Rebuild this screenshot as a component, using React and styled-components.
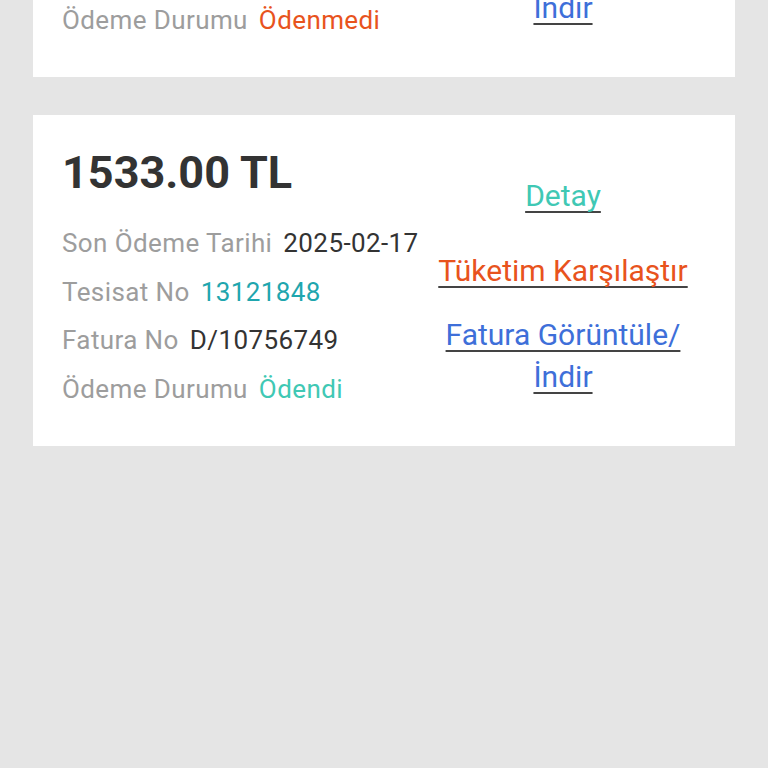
import React from "react";
import styled, { createGlobalStyle } from "styled-components";

const GlobalStyle = createGlobalStyle`
  body {
    margin: 0;
    background-color: #e5e5e5;
    font-family: Roboto, "Noto Sans", sans-serif;
  }
`;

const Page = styled.div`
  height: 768px;
  overflow: hidden;
`;

const List = styled.div`
  display: flex;
  flex-direction: column;
  gap: 38px;
  padding: 0 33px;
  margin-top: -254px;
`;

const Card = styled.div`
  display: flex;
  justify-content: space-between;
  background-color: #fff;
  height: 331px;
  box-sizing: border-box;
  padding: 30px 29px 0 29px;
`;

const Info = styled.div`
  display: flex;
  flex-direction: column;
`;

const Amount = styled.div`
  font-size: 45px;
  font-weight: 700;
  line-height: 56px;
  color: #333;
  margin-bottom: 18px;
`;

const Row = styled.div`
  display: flex;
  font-size: 26px;
  letter-spacing: 0.4px;
  line-height: 48.5px;
  white-space: nowrap;
`;

const Label = styled.span`
  color: #9d9d9d;
  margin-right: 11px;
`;

const Value = styled.span`
  color: ${(p) => p.color || "#333"};
`;

const Actions = styled.div`
  display: flex;
  flex-direction: column;
  align-items: center;
  width: 280px;
  padding-top: 30px;
  margin-right: 3px;
`;

const ActionLink = styled.a`
  display: block;
  font-size: 30px;
  line-height: 42px;
  text-align: center;
  color: ${(p) => p.color};
  text-decoration: underline;
  text-decoration-color: #444;
  text-decoration-thickness: 2px;
  text-decoration-skip-ink: none;
  text-underline-offset: 5px;
  margin-top: ${(p) => p.gap || 0}px;
  cursor: pointer;
`;

const TEAL = "#40c8b4";
const DARK_TEAL = "#1fa6ae";
const ORANGE = "#e8531d";
const BLUE = "#3e6fd9";

const bills = [
  {
    amount: "1842.50 TL",
    due: "2025-03-17",
    tesisat: "13121848",
    fatura: "D/10812203",
    paid: false,
  },
  {
    amount: "1533.00 TL",
    due: "2025-02-17",
    tesisat: "13121848",
    fatura: "D/10756749",
    paid: true,
  },
];

const BillCard = ({ bill }) => (
  <Card>
    <Info>
      <Amount>{bill.amount}</Amount>
      <Row>
        <Label>Son Ödeme Tarihi</Label>
        <Value>{bill.due}</Value>
      </Row>
      <Row>
        <Label>Tesisat No</Label>
        <Value color={DARK_TEAL}>{bill.tesisat}</Value>
      </Row>
      <Row>
        <Label>Fatura No</Label>
        <Value>{bill.fatura}</Value>
      </Row>
      <Row>
        <Label>Ödeme Durumu</Label>
        <Value color={bill.paid ? TEAL : ORANGE}>
          {bill.paid ? "Ödendi" : "Ödenmedi"}
        </Value>
      </Row>
    </Info>
    <Actions>
      <ActionLink color={TEAL}>Detay</ActionLink>
      <ActionLink color={ORANGE} gap={33}>
        Tüketim Karşılaştır
      </ActionLink>
      <ActionLink color={BLUE} gap={22}>
        Fatura Görüntüle/ İndir
      </ActionLink>
    </Actions>
  </Card>
);

export default function App() {
  return (
    <Page>
      <GlobalStyle />
      <List>
        {bills.map((bill) => (
          <BillCard key={bill.fatura} bill={bill} />
        ))}
      </List>
    </Page>
  );
}
